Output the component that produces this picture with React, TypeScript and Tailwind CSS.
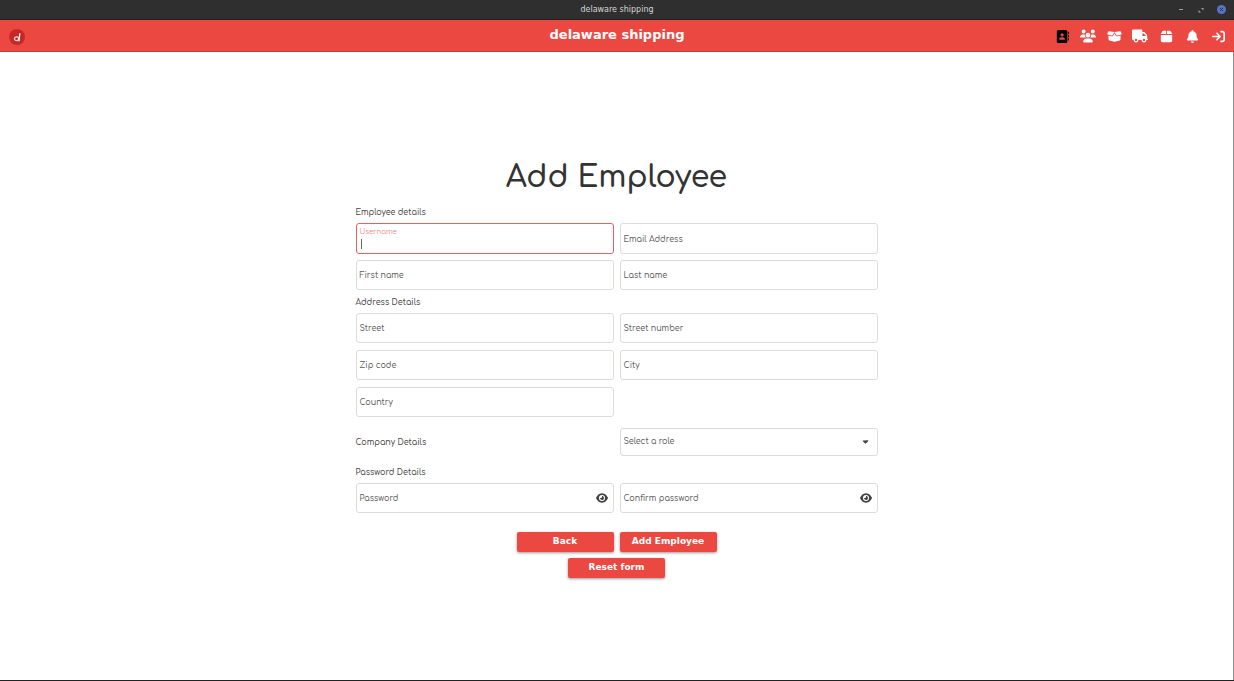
import { useState } from "react";
import type { ReactNode } from "react";
import {
  FaAddressBook,
  FaArrowRightToBracket,
  FaBell,
  FaBox,
  FaBoxOpen,
  FaCaretDown,
  FaEye,
  FaTruck,
  FaUsers,
} from "react-icons/fa6";

const navItems: { label: string; icon: ReactNode }[] = [
  { label: "Employees", icon: <FaAddressBook className="text-[13px] text-black" /> },
  { label: "Customers", icon: <FaUsers className="shrink-0 text-[16px]" /> },
  { label: "Packaging", icon: <FaBoxOpen className="shrink-0 text-[15px]" /> },
  { label: "Carriers", icon: <FaTruck className="shrink-0 text-[16px]" /> },
  { label: "Orders", icon: <FaBox className="text-[13px]" /> },
  { label: "Notifications", icon: <FaBell className="text-[13px]" /> },
  { label: "Log out", icon: <FaArrowRightToBracket className="text-[13px]" /> },
];

function TitleBar() {
  return (
    <div className="grid h-5 grid-cols-3 items-center border-b border-[#1f1f1f] bg-[#2f2f2f] px-2">
      <span className="col-start-2 pt-px text-center font-['DejaVu_Sans',sans-serif] text-[8px] leading-4 text-[#d6d6d6]">
        delaware shipping
      </span>
      <div className="flex items-center justify-end gap-3 text-[#a0a0a0]">
        <button aria-label="Minimize" className="flex size-2 items-center justify-center">
          <span className="h-px w-1 bg-current" />
        </button>
        <button aria-label="Restore" className="flex size-2 items-center justify-center">
          <svg viewBox="0 0 8 8" className="size-2" fill="currentColor">
            <path d="M4 2h2.500v2.500zM1.500 4v2.500H4z" />
          </svg>
        </button>
        <button aria-label="Close" className="flex size-[9px] items-center justify-center rounded-full bg-[#5873c4]">
          <svg viewBox="0 0 9 9" className="size-[9px]" stroke="#26345f" strokeWidth="1">
            <path d="M3 3l3 3M6 3L3 6" />
          </svg>
        </button>
      </div>
    </div>
  );
}

function Header() {
  return (
    <header className="grid h-8 grid-cols-[1fr_auto_1fr] items-center border-b border-[#c53b36] bg-[#ec4842] px-[9px]">
      <a href="#home" aria-label="Home" className="mt-[2px] size-4">
        <svg viewBox="0 0 16 16" className="size-4" fill="none">
          <circle cx="8" cy="8" r="8" fill="#c62828" />
          <ellipse cx="7.600" cy="9.700" rx="2.100" ry="1.900" stroke="#fbd5d4" strokeWidth="1.300" />
          <path d="M10.800 4.200l-.8 8" stroke="#fff" strokeWidth="1.300" />
        </svg>
      </a>
      <h1 className="pb-[2px] font-['DejaVu_Sans',sans-serif] text-[13px] font-bold leading-4 text-white">
        delaware shipping
      </h1>
      <nav className="mt-px flex items-center justify-end gap-3 text-white">
        {navItems.map(({ label, icon }) => (
          <a key={label} href="#" aria-label={label} className="flex w-[14px] justify-center">
            {icon}
          </a>
        ))}
      </nav>
    </header>
  );
}

function Field({
  id,
  label,
  type = "text",
  active = false,
}: {
  id: string;
  label: string;
  type?: string;
  active?: boolean;
}) {
  const [visible, setVisible] = useState(false);
  const [value, setValue] = useState("");
  const isPassword = type === "password";
  const floated = active || value !== "";
  return (
    <div
      className={
        active
          ? "relative flex min-h-[31px] items-stretch rounded-[3px] border border-[#ec5f5f]"
          : "relative flex min-h-[30px] items-stretch rounded-[3px] border border-[#dcdcdc]"
      }
    >
      <input
        id={id}
        type={isPassword && visible ? "text" : type}
        value={value}
        onChange={(e) => setValue(e.target.value)}
        className="min-w-0 flex-1 bg-transparent px-[3px] pt-[10px] text-[8px] font-medium text-[#444] outline-none"
      />
      <label
        htmlFor={id}
        className={
          floated
            ? "pointer-events-none absolute left-[3px] top-[3px] text-[7px] leading-[10px] text-[#f08784]"
            : "pointer-events-none absolute inset-y-0 left-[3px] flex items-center pt-[3px] text-[8px] font-medium leading-4 text-[#5c5c5c]"
        }
      >
        {label}
      </label>
      {active && value === "" && <span className="absolute bottom-1 left-1 h-[10px] w-px bg-[#666]" />}
      {isPassword && (
        <button
          type="button"
          aria-label={visible ? "Hide " + label : "Show " + label}
          onClick={() => setVisible(!visible)}
          className="pr-[5px] text-[12px] text-[#444]"
        >
          <FaEye />
        </button>
      )}
    </div>
  );
}

function SectionTitle({ children }: { children: ReactNode }) {
  return <h3 className="pt-[2px] text-[8px] font-medium leading-[21px] text-[#444]">{children}</h3>;
}

const buttonClass =
  "h-5 w-[97px] rounded-[2px] bg-[#ec4842] font-['DejaVu_Sans',sans-serif] text-[9px] font-bold text-white shadow-[0_1px_3px_rgba(0,0,0,0.4)]";

export default function App() {
  return (
    <div className="flex min-h-screen flex-col border-b border-[#222] bg-white font-[Comfortaa,Inter,sans-serif]">
      <TitleBar />
      <Header />
      <main className="flex flex-1 flex-col items-center justify-center border-r border-[#888]">
        <form className="w-full max-w-[522px]" onSubmit={(e) => e.preventDefault()}>
          <h2 className="mb-px pt-[2px] text-center text-[30px] font-semibold leading-[42px] text-[#333]">
            Add Employee
          </h2>

          <SectionTitle>Employee details</SectionTitle>
          <div className="grid grid-cols-2 gap-[6px]">
            <Field id="username" label="Username" active />
            <Field id="email" label="Email Address" type="email" />
            <Field id="first-name" label="First name" />
            <Field id="last-name" label="Last name" />
          </div>

          <SectionTitle>Address Details</SectionTitle>
          <div className="grid grid-cols-2 gap-x-[6px] gap-y-[7px]">
            <Field id="street" label="Street" />
            <Field id="street-number" label="Street number" />
            <Field id="zip" label="Zip code" />
            <Field id="city" label="City" />
            <Field id="country" label="Country" />
          </div>

          <div className="mt-[11px] grid grid-cols-2 items-center gap-x-[6px]">
            <SectionTitle>Company Details</SectionTitle>
            <div className="relative">
              <select
                aria-label="Select a role"
                defaultValue=""
                className="block h-7 w-full appearance-none rounded-[3px] border border-[#dcdcdc] bg-white px-[3px] text-[8px] font-medium text-[#5c5c5c] outline-none"
              >
                <option value="">Select a role</option>
              </select>
              <FaCaretDown className="pointer-events-none absolute right-2 top-[9px] text-[9px] text-[#444]" />
            </div>
          </div>

          <div className="mt-1">
            <SectionTitle>Password Details</SectionTitle>
          </div>
          <div className="grid grid-cols-2 gap-x-[6px]">
            <Field id="password" label="Password" type="password" />
            <Field id="confirm-password" label="Confirm password" type="password" />
          </div>

          <div className="mt-[19px] flex flex-col items-center gap-[6px]">
            <div className="flex gap-[6px]">
              <button type="button" className={buttonClass}>
                Back
              </button>
              <button type="submit" className={buttonClass}>
                Add Employee
              </button>
            </div>
            <button type="reset" className={buttonClass}>
              Reset form
            </button>
          </div>
        </form>
      </main>
    </div>
  );
}
